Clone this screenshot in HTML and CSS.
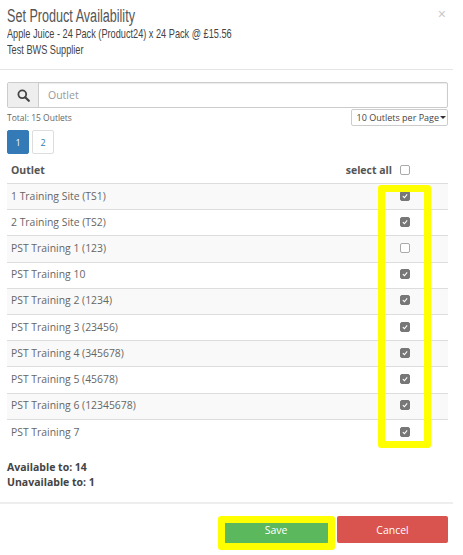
FILE: index.html
```html
<!DOCTYPE html>
<html lang="en">
<head>
<meta charset="utf-8">
<title>Set Product Availability</title>
<link rel="stylesheet" href="styles.css">
</head>
<body>
<div class="modal">
  <header class="modal-header">
    <span class="close">×</span>
    <h1>Set Product Availability</h1>
    <p>Apple Juice - 24 Pack (Product24) x 24 Pack @ £15.56</p>
    <p>Test BWS Supplier</p>
  </header>
  <div class="modal-body">
    <div class="search">
      <span class="search-addon">
        <svg width="13" height="13" viewBox="0 0 13 13"><circle cx="5.3" cy="5.3" r="3.9" fill="none" stroke="#444" stroke-width="1.8"/><path d="M8.2 8.2l3.6 3.6" stroke="#444" stroke-width="2.2" stroke-linecap="round"/></svg>
      </span>
      <span class="search-input">Outlet</span>
    </div>
    <div class="meta">
      <span class="total">Total: 15 Outlets</span>
      <span class="per-page">10 Outlets per Page<i class="caret"></i></span>
    </div>
    <div class="pager">
      <span class="page active">1</span>
      <span class="page">2</span>
    </div>
    <div class="table-head">
      <span>Outlet</span>
      <span class="select-all">select all <i class="box"></i></span>
    </div>
    <div class="table">
      <div class="row"><span>1 Training Site (TS1)</span><i class="box on"><svg viewBox="0 0 10 10"><path d="M2.3 5.2l2 2 3.4-4.2" fill="none" stroke="#fff" stroke-width="1.4"/></svg></i></div>
      <div class="row"><span>2 Training Site (TS2)</span><i class="box on"><svg viewBox="0 0 10 10"><path d="M2.3 5.2l2 2 3.4-4.2" fill="none" stroke="#fff" stroke-width="1.4"/></svg></i></div>
      <div class="row"><span>PST Training 1 (123)</span><i class="box"></i></div>
      <div class="row"><span>PST Training 10</span><i class="box on"><svg viewBox="0 0 10 10"><path d="M2.3 5.2l2 2 3.4-4.2" fill="none" stroke="#fff" stroke-width="1.4"/></svg></i></div>
      <div class="row"><span>PST Training 2 (1234)</span><i class="box on"><svg viewBox="0 0 10 10"><path d="M2.3 5.2l2 2 3.4-4.2" fill="none" stroke="#fff" stroke-width="1.4"/></svg></i></div>
      <div class="row"><span>PST Training 3 (23456)</span><i class="box on"><svg viewBox="0 0 10 10"><path d="M2.3 5.2l2 2 3.4-4.2" fill="none" stroke="#fff" stroke-width="1.4"/></svg></i></div>
      <div class="row"><span>PST Training 4 (345678)</span><i class="box on"><svg viewBox="0 0 10 10"><path d="M2.3 5.2l2 2 3.4-4.2" fill="none" stroke="#fff" stroke-width="1.4"/></svg></i></div>
      <div class="row"><span>PST Training 5 (45678)</span><i class="box on"><svg viewBox="0 0 10 10"><path d="M2.3 5.2l2 2 3.4-4.2" fill="none" stroke="#fff" stroke-width="1.4"/></svg></i></div>
      <div class="row"><span>PST Training 6 (12345678)</span><i class="box on"><svg viewBox="0 0 10 10"><path d="M2.3 5.2l2 2 3.4-4.2" fill="none" stroke="#fff" stroke-width="1.4"/></svg></i></div>
      <div class="row"><span>PST Training 7</span><i class="box on"><svg viewBox="0 0 10 10"><path d="M2.3 5.2l2 2 3.4-4.2" fill="none" stroke="#fff" stroke-width="1.4"/></svg></i></div>
    </div>
    <div class="summary">
      <div>Available to: 14</div>
      <div>Unavailable to: 1</div>
    </div>
  </div>
  <footer class="modal-footer">
    <button class="btn save">Save</button>
    <button class="btn cancel">Cancel</button>
  </footer>
  <div class="mark mark-column"></div>
  <div class="mark mark-save"></div>
</div>
</body>
</html>
```
FILE: styles.css
```css
* { box-sizing: border-box; }
html, body { margin: 0; background: #fff; }
body { width: 463px; height: 555px; overflow: hidden; font-family: "Open Sans", sans-serif; color: #555; }
.modal { position: relative; width: 453px; height: 555px; }
.modal-header { height: 70px; padding: 7px 7px 0; border-bottom: 1px solid #e5e5e5; position: relative; }
.modal-header h1 { margin: 0 0 1px; font: 400 18px/18px "Liberation Sans", sans-serif; color: #555; transform: scaleX(.7); transform-origin: left center; white-space: nowrap; }
.modal-header p { margin: 0; font: 400 13.5px/15.5px "Liberation Sans", sans-serif; color: #444; transform: scaleX(.68); transform-origin: left center; white-space: nowrap; }
.close { position: absolute; right: 7px; top: 5px; font: 400 14px/18px "Liberation Sans", sans-serif; color: #c8c8c8; }
.modal-body { padding: 12px 0 0 7px; height: 432px; }
.search { display: flex; height: 26px; width: 441px; border: 1px solid #ccc; border-radius: 2px; box-shadow: inset 0 1px 1px rgba(0,0,0,.08); }
.search-addon { width: 31px; background: #eee; border-right: 1px solid #ccc; display: flex; align-items: center; justify-content: center; }
.search-input { padding-left: 9px; font-size: 10.5px; line-height: 24px; color: #999; }
.meta { display: flex; justify-content: space-between; align-items: center; width: 441px; height: 17px; margin-top: 1px; }
.total { font-size: 8.5px; color: #666; }
.per-page { display: flex; align-items: center; height: 17px; padding: 0 1px 0 5px; border: 1px solid #ccc; border-radius: 2px; font-size: 9px; color: #444; }
.caret { width: 0; height: 0; margin-left: 1px; border: 3px solid transparent; border-top-color: #333; border-bottom: 0; }
.pager { display: flex; gap: 3px; margin-top: 4px; }
.page { width: 22px; height: 24px; border: 1px solid #ddd; border-radius: 2px; display: flex; align-items: center; justify-content: center; font-size: 9px; color: #337ab7; }
.page.active { background: #337ab7; border-color: #337ab7; color: #fff; }
.table-head { display: flex; justify-content: space-between; align-items: center; width: 441px; height: 30px; padding: 2px 38px 0 4px; border-bottom: 1px solid #ddd; font-size: 10.5px; font-weight: 700; color: #555; }
.select-all { display: flex; align-items: center; gap: 8px; }
.table { width: 441px; }
.row { display: flex; justify-content: space-between; align-items: center; height: 26.2px; padding: 0 38px 2px 4px; border-bottom: 1px solid #ddd; font-size: 10.4px; color: #666; }
.row:nth-child(odd) { background: #f9f9f9; }
.row:last-child { border-bottom: 0; background: #fff; }
.box { display: block; width: 10px; height: 10px; border: 1px solid #aaa; border-radius: 2px; background: #fff; font-style: normal; }
.box.on { background: #777; border-color: #777; }
.box svg { display: block; width: 100%; height: 100%; }
.summary { margin-top: 14px; font-size: 10.5px; line-height: 15.5px; font-weight: 700; color: #444; }
.modal-footer { border-top: 2px solid #eee; height: 53px; display: flex; justify-content: flex-end; gap: 8px; padding: 12px 5px 0 0; }
.btn { width: 111px; height: 27px; border: 0; border-radius: 2px; color: #fff; font: 400 10.5px "Open Sans", sans-serif; padding: 0; }
.save { background: #5cb85c; width: 106px; }
.cancel { background: #d9534f; }
.mark { position: absolute; border: 7px solid #ff0; border-radius: 3px; pointer-events: none; }
.mark-column { left: 378px; top: 185px; width: 53px; height: 263px; }
.mark-save { left: 218px; top: 516px; width: 117px; height: 34px; }
```
